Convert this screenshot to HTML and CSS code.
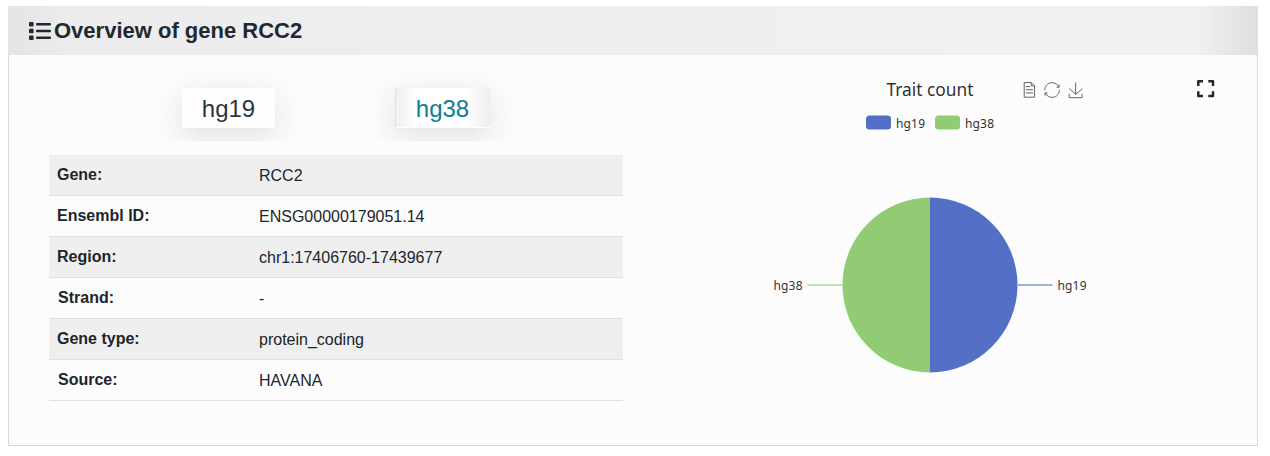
FILE: index.html
```html
<!DOCTYPE html>
<html lang="en">
<head>
<meta charset="utf-8">
<title>Overview of gene RCC2</title>
<link rel="stylesheet" href="styles.css">
</head>
<body>
<section class="card">
  <header class="card-header">
    <svg class="list-icon" width="22" height="18" viewBox="0 0 22 18">
      <rect x="0" y="0" width="4.6" height="4.4" rx="1"/><rect x="0" y="6.8" width="4.6" height="4.4" rx="1"/><rect x="0" y="13.6" width="4.6" height="4.4" rx="1"/>
      <rect x="7" y="1" width="15" height="2.4" rx="1"/><rect x="7" y="7.8" width="15" height="2.4" rx="1"/><rect x="7" y="14.6" width="15" height="2.4" rx="1"/>
    </svg>
    <h1 class="title">Overview of gene RCC2</h1>
  </header>
  <div class="card-body">
    <div class="details">
      <div class="tabs">
        <div class="tab-cell"><span class="tab">hg19</span></div>
        <div class="tab-cell"><span class="tab tab-active">hg38</span></div>
      </div>
      <dl class="table">
        <div class="row"><dt>Gene:</dt><dd>RCC2</dd></div>
        <div class="row"><dt>Ensembl ID:</dt><dd>ENSG00000179051.14</dd></div>
        <div class="row"><dt>Region:</dt><dd>chr1:17406760-17439677</dd></div>
        <div class="row"><dt class="nudge">Strand:</dt><dd>-</dd></div>
        <div class="row"><dt>Gene type:</dt><dd>protein_coding</dd></div>
        <div class="row"><dt class="nudge">Source:</dt><dd>HAVANA</dd></div>
      </dl>
    </div>
    <svg class="chart" width="574" height="350" viewBox="643 55 574 350">
      <text class="chart-title" x="886.5" y="96" textLength="87" lengthAdjust="spacingAndGlyphs">Trait count</text>
      <g class="tools">
        <path transform="translate(1021.2 82) scale(.262)" d="M17.5,17.3H33M45.4,29.5h-28M11.5,2v56H51V14.8L38.4,2H11.5zM38.4,2.2v12.7H51M45.4,41.7h-28"/>
        <path transform="translate(1044.2 82.2) scale(.262)" d="M47,18.9h9.8V8.7M56.3,20.1C52.1,9,40.5,0.6,26.8,2.1C12.6,3.7,1.6,16.2,2.1,30.6M13,41.1H3.1v10.2M3.7,39.9c4.2,11.1,15.8,19.5,29.5,18c14.2-1.6,25.2-14.1,24.7-28.5"/>
        <path transform="translate(1068 82.5) scale(.262)" d="M4.7,22.9L29.3,45.5L54.7,23.4M4.6,43.6V58H53.8V43.6M29.2,45.1V0"/>
      </g>
      <rect class="blue" x="866" y="115.5" width="25" height="14" rx="3.5"/>
      <text class="label" x="896" y="128" textLength="29">hg19</text>
      <rect class="green" x="935" y="115.5" width="25" height="14" rx="3.5"/>
      <text class="label" x="965" y="128" textLength="29">hg38</text>
      <path class="green" d="M930 372.5A87.5 87.5 0 0 1 930 197.5Z"/>
      <path class="blue" d="M930 197.5A87.5 87.5 0 0 1 930 372.5Z"/>
      <path class="lead-green" d="M807.5 285H842.5"/>
      <path class="lead-blue" d="M1017.5 285H1052.5"/>
      <text class="label" x="773.5" y="290" textLength="29">hg38</text>
      <text class="label" x="1057.5" y="290" textLength="29">hg19</text>
      <path class="expand" d="M1198.3 86V81.3H1203M1208.3 81.3H1213V86M1213 91.3V96H1208.3M1203 96H1198.3V91.3"/>
    </svg>
  </div>
</section>
</body>
</html>
```
FILE: styles.css
```css
* { box-sizing: border-box; }
body {
  margin: 0;
  padding: 6px 12px 10px 8px;
  background: #fff;
  color: #212529;
  font: 16px/24px "Liberation Sans", Arial, sans-serif;
}
.card {
  width: 1250px;
  height: 440px;
  background: #fcfcfc;
  border: solid #d8d8d8;
  border-width: 0 1px 1px;
}
.card-header {
  display: flex;
  align-items: center;
  gap: 3px;
  height: 49px;
  margin: 0 -1px;
  padding-left: 21px;
  background: linear-gradient(90deg, #e4e4e4, #ececec 5%, #f1f1f1 95%, #dedede);
}
.list-icon { fill: #212832; }
.title {
  margin: 0;
  font-size: 22px;
  line-height: 28px;
  color: #212832;
}
.card-body {
  display: flex;
  gap: 20px;
  padding: 0 40px;
}
.details { width: 574px; }
.tabs {
  display: flex;
  height: 86px;
  padding: 33px 72px 0 71px;
  overflow: hidden;
  justify-content: space-between;
}
.tab-cell { width: 216px; }
.tab {
  display: block;
  width: 93px;
  height: 40px;
  margin-left: 62px;
  background: #fefefe;
  box-shadow: 0 8px 32px rgba(33, 40, 50, .13);
  font-size: 24px;
  line-height: 42px;
  text-align: center;
  color: #2f3441;
}
.tab-active {
  width: 95px;
  margin-left: 59px;
  border-left: 1px solid #e0e0e6;
  border-bottom: 1px solid #fff;
  background: linear-gradient(90deg, #f0f0f0, #fff 24%, #fff 74%, #ededed);
  color: #0c7d94;
}
.table { margin: 14px 0 0; }
.row {
  display: flex;
  height: 41px;
  border-bottom: 1px solid #dee0e6;
}
.row:nth-child(odd) { background: #efefef; }
.row dt {
  width: 210px;
  padding: 8px 8px 0;
  font-weight: bold;
}
.row .nudge { padding-left: 9px; }
.row dd {
  margin: 0;
  padding-top: 9px;
}
.chart {
  display: block;
  font-family: "Noto Sans", "Open Sans", sans-serif;
}
.chart-title { font-size: 18px; fill: #333; }
.label { font-size: 12px; fill: #333; }
.blue { fill: #5470c6; }
.green { fill: #91cc75; }
.tools path {
  fill: none;
  stroke: #666;
  stroke-width: 1;
  vector-effect: non-scaling-stroke;
}
.lead-blue { stroke: #a3b1df; stroke-width: 2; }
.lead-green { stroke: #c1e2b2; stroke-width: 2; }
.expand { fill: none; stroke: #212832; stroke-width: 2.5; stroke-linejoin: round; }
```
